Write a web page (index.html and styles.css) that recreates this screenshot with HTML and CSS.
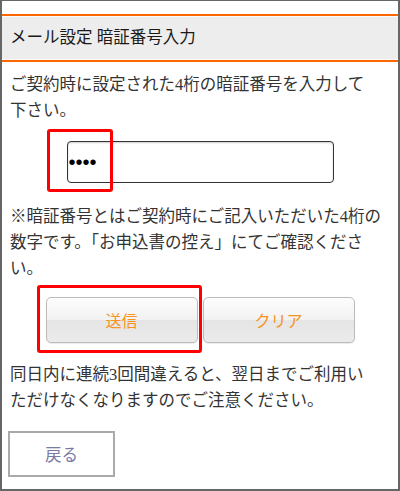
FILE: index.html
```html
<!DOCTYPE html>
<html lang="ja">
<head>
    <meta charset="UTF-8">
    <meta name="viewport" content="width=device-width, initial-scale=1.0">
    <title>メール設定 暗証番号入力</title>
    <link rel="stylesheet" href="styles.css">
</head>
<body>
    <div class="frame">
        <h1 class="page-title">メール設定 暗証番号入力</h1>

        <div class="content">
            <p class="lead">ご契約時に設定された4桁の暗証番号を入力して<br>下さい。</p>

            <div class="pin-row">
                <input type="password" class="pin-input" value="1234">
            </div>

            <p class="note">※暗証番号とはご契約時にご記入いただいた4桁の<br>数字です。「お申込書の控え」にてご確認くださ<br>い。</p>

            <div class="btn-row">
                <button class="btn">送信</button>
                <button class="btn">クリア</button>
            </div>

            <p class="warning">同日内に連続3回間違えると、翌日までご利用い<br>ただけなくなりますのでご注意ください。</p>

            <button class="back-btn">戻る</button>
        </div>

        <!-- annotation boxes -->
        <div class="mark mark-pin"></div>
        <div class="mark mark-send"></div>
    </div>
</body>
</html>
```

FILE: styles.css
```css
body {
    margin: 0;
    background: #fff;
    font-family: "Liberation Serif", "Noto Sans CJK JP", serif;
    color: #333;
}
.frame {
    position: relative;
    height: 491px;
    box-sizing: border-box;
    border: solid #666;
    border-width: 1px 2px 2px 2px;
}
.page-title {
    margin: 13px 0 0;
    height: 44px;
    line-height: 44px;
    padding: 0 8px;
    font-size: 16.5px;
    font-weight: normal;
    color: #1a1a1a;
    background-color: #ededed;
    border-top: 2px solid #ff6600;
    border-bottom: 2px solid #ff6600;
    box-shadow: inset 0 1px 0 #fafafa, inset 0 -1px 0 #fafafa;
}
.content {
    padding: 0 8px;
    font-size: 16.5px;
    line-height: 26px;
}
.content p {
    margin: 0;
}
.lead {
    padding-top: 10px;
}
.pin-row {
    display: flex;
    justify-content: center;
    margin-top: 17px;
}
.pin-input {
    width: 267px;
    height: 42px;
    box-sizing: border-box;
    border: 1px solid #333;
    border-radius: 4px;
    box-shadow: inset 0 1px 2px rgba(0,0,0,0.2);
    padding: 0 1px;
    font-family: "Liberation Sans", sans-serif;
    font-size: 20px;
    color: #000;
    outline: none;
}
.note {
    margin-top: 21px !important;
}
.btn-row {
    display: flex;
    justify-content: center;
    gap: 5px;
    margin-top: 15px;
}
.btn {
    width: 152px;
    height: 46px;
    border: 1px solid #bbb;
    border-radius: 5px;
    background: linear-gradient(#fdfdfd 0%, #f2f2f2 50%, #e5e5e5 51%, #ebebeb 100%);
    box-shadow: 0 1px 1px rgba(0,0,0,0.08);
    font-family: "Noto Sans CJK JP", sans-serif;
    font-size: 16px;
    color: #f7931e;
    cursor: pointer;
}
.warning {
    margin-top: 19px !important;
}
.back-btn {
    display: block;
    margin: 17px 0 0 -2px;
    width: 107px;
    height: 46px;
    border: 2px solid #aaa;
    background: #fff;
    font-family: "Liberation Serif", "Noto Sans CJK JP", serif;
    font-size: 16.5px;
    color: #7a7aa6;
    cursor: pointer;
}
.mark {
    position: absolute;
    border: 3px solid #f00;
    border-radius: 3px;
    box-sizing: border-box;
}
.mark-pin {
    left: 45px;
    top: 128px;
    width: 66px;
    height: 63px;
}
.mark-send {
    left: 35px;
    top: 284px;
    width: 165px;
    height: 68px;
}
```
